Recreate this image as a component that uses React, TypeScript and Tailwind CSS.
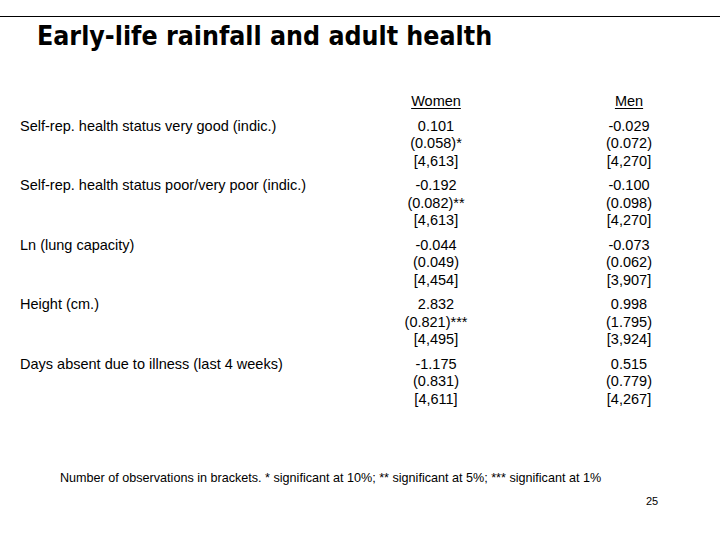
import React from "react";

const rows = [
  { label: "Self-rep. health status very good (indic.)", w: ["0.101", "(0.058)*", "[4,613]"], m: ["-0.029", "(0.072)", "[4,270]"] },
  { label: "Self-rep. health status poor/very poor (indic.)", w: ["-0.192", "(0.082)**", "[4,613]"], m: ["-0.100", "(0.098)", "[4,270]"] },
  { label: "Ln (lung capacity)", w: ["-0.044", "(0.049)", "[4,454]"], m: ["-0.073", "(0.062)", "[3,907]"] },
  { label: "Height (cm.)", w: ["2.832", "(0.821)***", "[4,495]"], m: ["0.998", "(1.795)", "[3,924]"] },
  { label: "Days absent due to illness (last 4 weeks)", w: ["-1.175", "(0.831)", "[4,611]"], m: ["0.515", "(0.779)", "[4,267]"] },
];

export default function App() {
  return (
    <div className="w-[720px] h-[540px] bg-white text-black overflow-hidden flex flex-col" style={{ fontFamily: '"Liberation Sans", Arial, sans-serif' }}>
      <div className="h-[16px]" />
      <div className="h-px bg-black w-full" />
      <div
        className="pl-[37px] pt-[2px] h-[33px] text-[26.5px] leading-[33px] font-bold"
        style={{ fontFamily: '"DejaVu Sans Condensed", "DejaVu Sans", sans-serif' }}
      >
        Early-life rainfall and adult health
      </div>
      <div className="pl-[20px] pt-[43px] text-[14.5px] leading-[17.5px]">
        <div className="flex">
          <div className="w-[366px]" />
          <div className="w-[100px] text-center"><span className="underline underline-offset-2">Women</span></div>
          <div className="w-[93px]" />
          <div className="w-[100px] text-center"><span className="underline underline-offset-2">Men</span></div>
        </div>
        <div className="flex flex-col gap-[7px] pt-[7px]">
          {rows.map((r) => (
            <div key={r.label} className="flex">
              <div className="w-[366px]">{r.label}</div>
              <div className="w-[100px] flex flex-col items-center">
                {r.w.map((t, i) => <div key={i}>{t}</div>)}
              </div>
              <div className="w-[93px]" />
              <div className="w-[100px] flex flex-col items-center">
                {r.m.map((t, i) => <div key={i}>{t}</div>)}
              </div>
            </div>
          ))}
        </div>
      </div>
      <div className="pl-[60px] pt-[63px] text-[12.6px] leading-[15px]">
        Number of observations in brackets. * significant at 10%; ** significant at 5%; *** significant at 1%
      </div>
      <div className="pl-[646px] pt-[9px] text-[11px] leading-[13px]">25</div>
    </div>
  );
}
